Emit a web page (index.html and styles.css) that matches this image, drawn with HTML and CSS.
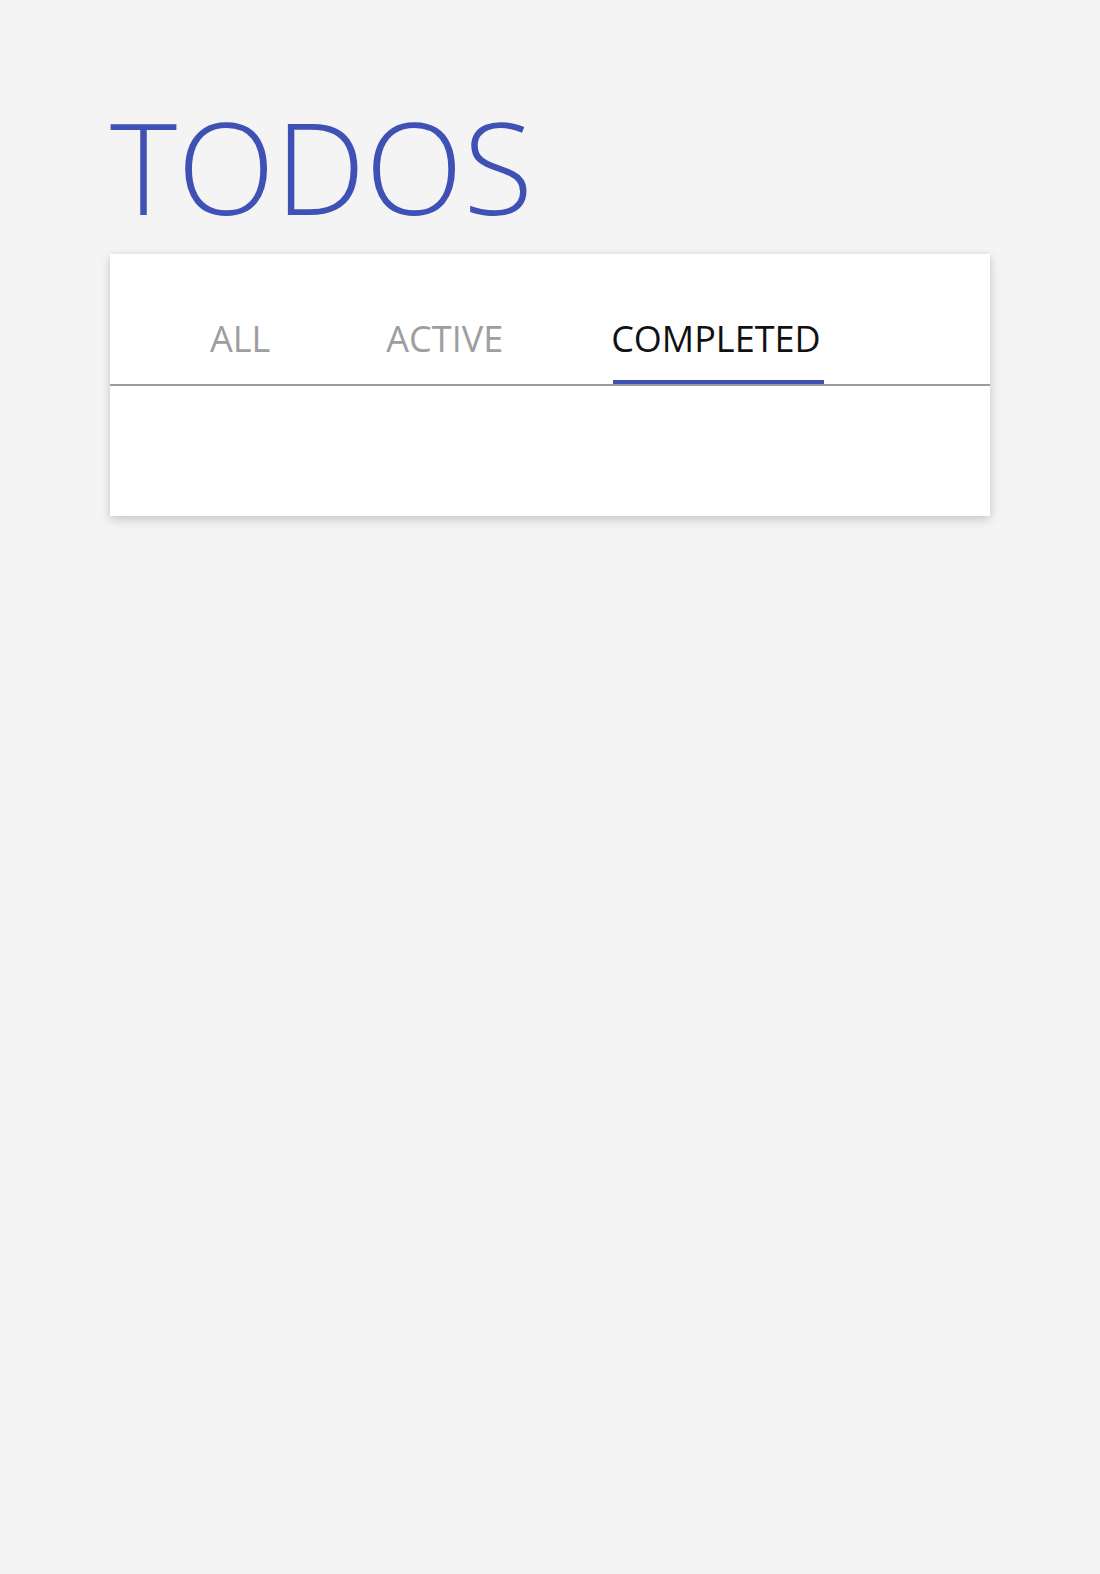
FILE: index.html
```html
<!DOCTYPE html>
<html>
<head>
<meta charset="utf-8">
<link rel="stylesheet" href="styles.css">
</head>
<body>
<main class="page">
  <h1 class="title">TODOS</h1>
  <section class="card">
    <nav class="tabs">
      <span class="tab tab-all">ALL</span>
      <span class="tab tab-act">ACTIVE</span>
      <span class="tab tab-active">COMPLETED</span>
    </nav>
    <div class="list"></div>
  </section>
</main>
</body>
</html>
```
FILE: styles.css
```css
html, body {
  margin: 0;
  padding: 0;
  background: #f4f4f4;
  font-family: "Open Sans", "Liberation Sans", sans-serif;
}
body {
  min-height: 100vh;
}
.page {
  padding: 1px 0 40px 110px;
}
.title {
  margin: 78px 0 1px 0;
  font-size: 128px;
  font-weight: 300;
  line-height: 174px;
  color: #3f51b5;
  height: 174px;
}
.card {
  width: 880px;
  background: #fff;
  box-shadow: 0 4px 10px rgba(0, 0, 0, 0.16), 0 0 6px rgba(0, 0, 0, 0.06);
}
.tabs {
  display: flex;
  padding-left: 100px;
  box-sizing: border-box;
  border-bottom: 2px solid #9b9b9b;
  height: 132px;
}
.tab {
  position: relative;
  padding-top: 60px;
  font-size: 36px;
  font-weight: 400;
  line-height: 49px;
  color: #9e9e9e;
}
.tab-all {
  margin-right: 116px;
}
.tab-act {
  margin-right: 108px;
}
.tab-active {
  color: #111;
}
.tab-active::after {
  content: "";
  position: absolute;
  left: 2px;
  right: -3px;
  bottom: 0;
  height: 4px;
  background: #3f51b5;
}
.list {
  height: 130px;
}
```
